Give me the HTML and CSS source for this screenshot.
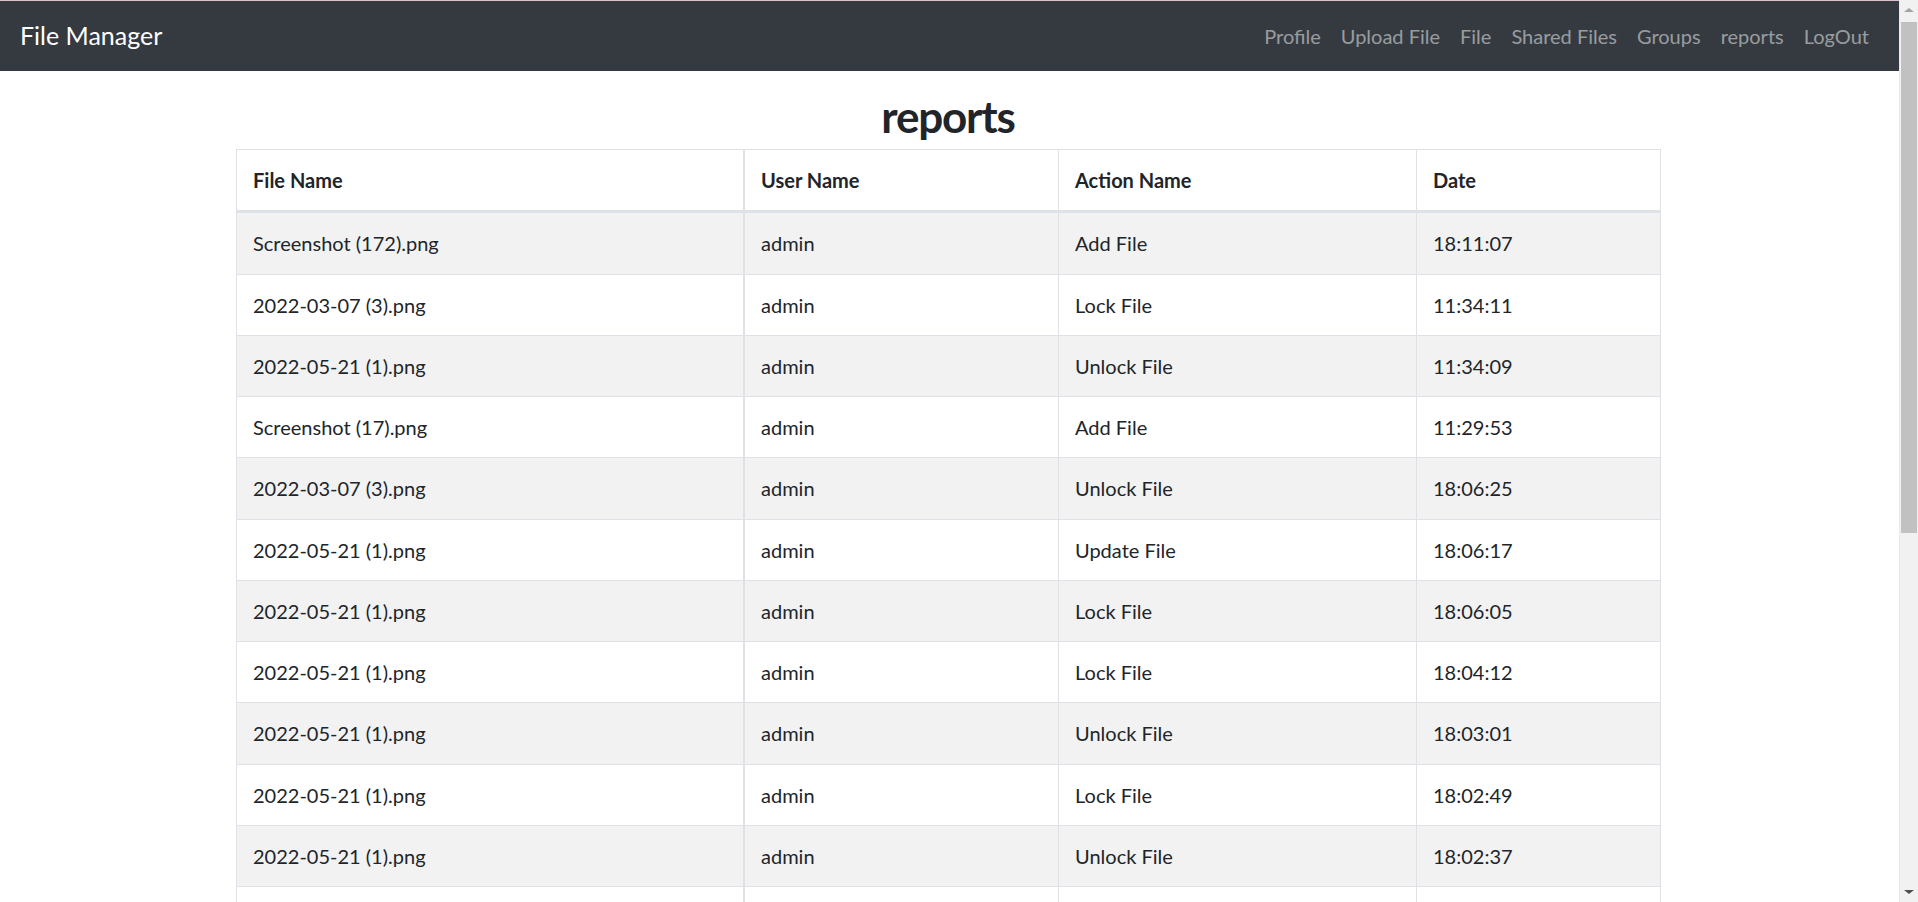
FILE: index.html
```html
<!DOCTYPE html>
<html>
<head>
<meta charset="utf-8">
<title>reports</title>
<link rel="stylesheet" href="styles.css">
</head>
<body>
<div class="page">
  <div class="topline"></div>
  <nav class="navbar">
    <a class="brand" href="#">File Manager</a>
    <ul class="nav">
      <li><a class="nav-link" href="#">Profile</a></li>
      <li><a class="nav-link" href="#">Upload File</a></li>
      <li><a class="nav-link" href="#">File</a></li>
      <li><a class="nav-link" href="#">Shared Files</a></li>
      <li><a class="nav-link" href="#">Groups</a></li>
      <li><a class="nav-link" href="#">reports</a></li>
      <li><a class="nav-link" href="#">LogOut</a></li>
    </ul>
  </nav>
  <main class="container">
    <h1 class="title">reports</h1>
    <table class="table">
      <thead>
        <tr>
          <th class="c-file">File Name</th>
          <th class="c-user">User Name</th>
          <th class="c-action">Action Name</th>
          <th class="c-date">Date</th>
        </tr>
      </thead>
      <tbody>
        <tr><td class="c-file">Screenshot (172).png</td><td>admin</td><td>Add File</td><td>18:11:07</td></tr>
        <tr><td class="c-file">2022-03-07 (3).png</td><td>admin</td><td>Lock File</td><td>11:34:11</td></tr>
        <tr><td class="c-file">2022-05-21 (1).png</td><td>admin</td><td>Unlock File</td><td>11:34:09</td></tr>
        <tr><td class="c-file">Screenshot (17).png</td><td>admin</td><td>Add File</td><td>11:29:53</td></tr>
        <tr><td class="c-file">2022-03-07 (3).png</td><td>admin</td><td>Unlock File</td><td>18:06:25</td></tr>
        <tr><td class="c-file">2022-05-21 (1).png</td><td>admin</td><td>Update File</td><td>18:06:17</td></tr>
        <tr><td class="c-file">2022-05-21 (1).png</td><td>admin</td><td>Lock File</td><td>18:06:05</td></tr>
        <tr><td class="c-file">2022-05-21 (1).png</td><td>admin</td><td>Lock File</td><td>18:04:12</td></tr>
        <tr><td class="c-file">2022-05-21 (1).png</td><td>admin</td><td>Unlock File</td><td>18:03:01</td></tr>
        <tr><td class="c-file">2022-05-21 (1).png</td><td>admin</td><td>Lock File</td><td>18:02:49</td></tr>
        <tr><td class="c-file">2022-05-21 (1).png</td><td>admin</td><td>Unlock File</td><td>18:02:37</td></tr>
        <tr><td class="c-file">2022-05-21 (1).png</td><td>admin</td><td>Lock File</td><td>18:02:21</td></tr>
        <tr><td class="c-file">2022-05-21 (1).png</td><td>admin</td><td>Add File</td><td>18:01:58</td></tr>
        <tr><td class="c-file">2022-03-07 (3).png</td><td>admin</td><td>Lock File</td><td>17:59:40</td></tr>
        <tr><td class="c-file">2022-03-07 (3).png</td><td>admin</td><td>Unlock File</td><td>17:59:12</td></tr>
        <tr><td class="c-file">Screenshot (17).png</td><td>admin</td><td>Lock File</td><td>17:58:44</td></tr>
        <tr><td class="c-file">Screenshot (17).png</td><td>admin</td><td>Unlock File</td><td>17:58:30</td></tr>
        <tr><td class="c-file">2022-03-07 (3).png</td><td>admin</td><td>Add File</td><td>17:57:03</td></tr>
        <tr><td class="c-file">Screenshot (172).png</td><td>admin</td><td>Lock File</td><td>17:55:19</td></tr>
        <tr><td class="c-file">Screenshot (172).png</td><td>admin</td><td>Unlock File</td><td>17:55:02</td></tr>
        <tr><td class="c-file">Screenshot (17).png</td><td>admin</td><td>Add File</td><td>17:54:36</td></tr>
      </tbody>
    </table>
  </main>
</div>
<div class="scrollbar" aria-hidden="true">
  <div class="sb-up"></div>
  <div class="sb-thumb"></div>
  <div class="sb-down"></div>
</div>
</body>
</html>
```

FILE: styles.css
```css
body {
  margin: 0;
  font-family: Lato, "Liberation Sans", sans-serif;
  font-size: 20px;
  line-height: 30px;
  color: #212529;
  background: #fff;
}
.page {
  width: calc(100% - 19px);
}
.topline {
  height: 1px;
  background: #dcc3ca;
}
.navbar {
  display: flex;
  justify-content: space-between;
  align-items: center;
  height: 70px;
  box-sizing: border-box;
  padding: 10px 20px;
  background: #343a40;
}
.brand {
  color: #fff;
  text-decoration: none;
  font-size: 25px;
  line-height: 37.5px;
}
.nav {
  display: flex;
  list-style: none;
  margin: 0;
  padding: 0;
}
.nav-link {
  display: block;
  padding: 10px;
  color: rgba(255, 255, 255, 0.5);
  text-decoration: none;
}
.container {
  width: 1424px;
  padding-right: 3px;
  margin: 0 auto;
}
.title {
  margin: 15px 0 3px;
  text-align: center;
  font-size: 44px;
  line-height: 60px;
  font-weight: 700;
  letter-spacing: -1.2px;
}
.table {
  width: 1424px;
  table-layout: fixed;
  border-collapse: collapse;
  margin-bottom: 20px;
}
.table th,
.table td {
  box-sizing: border-box;
  text-align: left;
  padding: 15px 16px;
  line-height: 30.25px;
  border: 1px solid #dee2e6;
  vertical-align: top;
}
.table thead th {
  border-bottom: 3px solid #dee2e6;
  font-weight: 700;
}
.table .c-file {
  border-right-width: 2px;
}
.table tbody tr:nth-child(odd) {
  background: #f2f2f2;
}
.c-file { width: 507.5px; }
.c-user { width: 314.5px; }
.c-action { width: 358px; }
.c-date { width: 244px; }

.scrollbar {
  position: fixed;
  top: 0;
  right: 0;
  width: 19px;
  height: 100%;
  background: #f1f1f1;
  border-left: 1px solid #e9e9e9;
  box-sizing: border-box;
}
.sb-up,
.sb-down {
  position: absolute;
  left: 4px;
  width: 0;
  height: 0;
  border-left: 5px solid transparent;
  border-right: 5px solid transparent;
}
.sb-up {
  top: 8px;
  border-bottom: 4px solid #a3a3a3;
}
.sb-down {
  bottom: 8px;
  border-top: 4px solid #505050;
}
.sb-thumb {
  position: absolute;
  top: 22px;
  left: 1px;
  right: 1px;
  height: 511px;
  background: #c1c1c1;
}
```
